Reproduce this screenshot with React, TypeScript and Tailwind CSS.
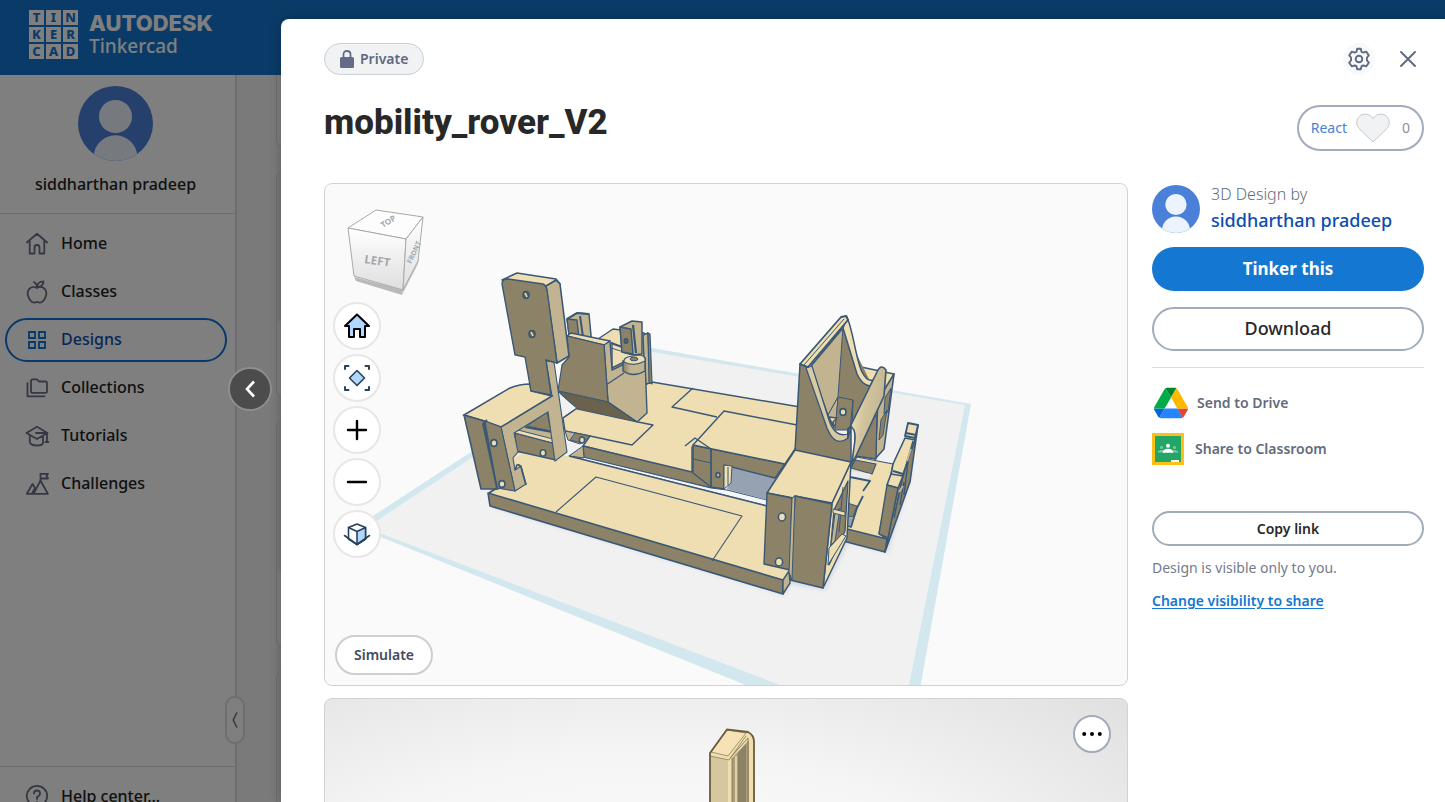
import type { ReactNode } from "react";

const TOP = "#eedeb1";
const MID = "#c2b490";
const DARK = "#8c8268";
const DEEP = "#6b624e";
const INK = "#3a5876";

function F({ p, c = TOP, s = INK, w = 1 }: { p: string; c?: string; s?: string; w?: number }) {
  return <polygon points={p} fill={c} stroke={s} strokeWidth={w} strokeLinejoin="round" />;
}

function L({ p, w = 1 }: { p: string; w?: number }) {
  return <polyline points={p} fill="none" stroke={INK} strokeWidth={w} strokeLinejoin="round" />;
}

function Hole({ x, y, r = 3.4, c = TOP }: { x: number; y: number; r?: number; c?: string }) {
  return <ellipse cx={x} cy={y} rx={r} ry={r + 0.4} fill={c} stroke={INK} strokeWidth={1.6} />;
}

function RoverScene() {
  return (
    <svg viewBox="325 184 802 501" preserveAspectRatio="xMidYMid slice" className="absolute inset-0 size-full" role="img" aria-label="3D view of the rover">
      <defs>
        <linearGradient id="flap" x1="0" x2="1" y1="0" y2="0.4">
          <stop offset="0.2" stopColor={TOP} />
          <stop offset="0.5" stopColor="#d2c49d" />
          <stop offset="1" stopColor={MID} />
        </linearGradient>
        <linearGradient id="boss" x1="0" x2="1">
          <stop offset="0" stopColor={DARK} />
          <stop offset="0.35" stopColor={MID} />
          <stop offset="1" stopColor={MID} />
        </linearGradient>
        <linearGradient id="cube" x1="0" x2="0" y1="0" y2="1">
          <stop offset="0" stopColor="#ffffff" />
          <stop offset="1" stopColor="#dedede" />
        </linearGradient>
        <filter id="soft" x="-10%" y="-10%" width="120%" height="120%">
          <feGaussianBlur stdDeviation="2" />
        </filter>
      </defs>

      {/* workplane */}
      <polygon points="356,527 635,345 971,404 918,700 785,701" fill="#d2e8ee" />
      <polygon points="366,528 635,349 965,405 906,700 820,700" fill="#f1f1f1" />
      <polygon points="489,506 784,595 791,584 825,590 848,543 888,553 912,470 880,480" fill="#c3cad6" opacity="0.6" filter="url(#soft)" />

      {/* rear deck */}
      <F p="577,408 652,382 800,407 800,465 692,473 583,446 590,436 565,431 563,418" w={1.4} />
      <F p="583,446 692,472 692,447 713,450 711,488 584,458" c={DARK} w={1.4} />
      <F p="583,457 711,488 727,490 767,500 767,506 569,456" c="#f4f6f9" w={1.2} />
      <F p="733,467 777,477 767,500 727,489" c="#96a2b1" s="none" />
      <F p="693,445 785,464 775,478 724,465 724,489 711,487 693,473" c={DARK} w={1.4} />
      <F p="724,411 797,425 797,446 785,464 693,445" w={1.4} />
      <F p="724,465 732,466 731,483 724,489" />
      <L p="693,459 711,463" />
      <L p="711,448 711,488" w={1.8} />
      <L p="685,446 695,438 711,449" w={1.4} />
      <L p="728,467 728,485" />
      <Hole x={718} y={475} r={2} c={MID} />
      <L p="693,388 672,407 717,417" w={1.3} />
      <L p="563,418 577,408" w={1.4} />
      <L p="638,422 653,425 632,445 590,436" w={1.4} />
      <F p="565,431 590,436 580,444 568,440" c={MID} />
      <F p="575,433 590,436 582,443 570,440" c={DARK} />
      <Hole x={582} y={440} r={2.6} />
      <F p="569,456 583,446 584,458" c={MID} />

      {/* front base */}
      <F p="488,493 500,470 522,452 569,456 767,506 765,564 789,571 783,580" s="none" />
      <L p="569,456 767,506" w={1.6} />
      <F p="488,493 783,580 783,594 490,506" c={DARK} w={1.6} />
      <F p="783,580 789,571 790,583 783,594" c={MID} w={1.4} />
      <L p="556,512 596,477 742,516 712,561" w={1.1} />

      {/* bracket, clips and boss */}
      <F p="567,319 577,313 589,314 592,346 570,340" c={MID} w={1.5} />
      <F p="567,319 577,320 579,338 569,336" c={DARK} w={1.4} />
      <L p="580,316 583,337" w={2} />
      <L p="567,319 577,313 589,314" w={2} />
      <F p="598,339 613,329 644,333 650,360 645,376 610,370" w={1.4} />
      <L p="611,343 625,348" w={2} />
      <L p="611,348 624,352" />
      <F p="643,335 648,333 650,383 645,384" c={MID} w={1.4} />
      <F p="648,333 650,334 652,384 649,382" c={DARK} w={1.2} />
      <F p="620,327 632,321 642,322 642,354 633,355 622,352" c={MID} w={1.5} />
      <F p="620,327 631,329 633,354 622,352" c={DARK} w={1.4} />
      <L p="633,325 636,353" w={2.2} />
      <Hole x={626} y={341} r={1.8} c={DEEP} />
      <F p="604,344 610,341 612,370 624,364 645,358 647,413 637,422 608,402" c={MID} w={1.4} />
      <path d="M623 361 V371 Q633 378 645 371 V360 Z" fill="url(#boss)" stroke={INK} strokeWidth="1.4" />
      <path d="M624 362 Q623 357 633 356 L640 355 Q646 356 645 361 Q634 367 624 362 Z" fill={TOP} stroke={INK} strokeWidth="1.2" />
      <ellipse cx="634" cy="359" rx="4" ry="1.8" fill={DARK} stroke={INK} />
      <L p="606,385 624,373" w={1.4} />
      <L p="612,342 612,368 624,362" w={1.4} />
      <F p="567,336 571,333 610,341 604,345" w={1.4} />
      <F p="567,336 604,345 608,402 558,391 562,365 569,357" c={DARK} w={1.2} />
      <F p="558,391 608,402 637,422 577,409" c={DEEP} w={1.2} />
      <F p="559,394 576,408 563,416" c="#f1f1f1" s="none" />

      {/* left block */}
      <F p="515,430 548,412 556,452 518,452" c={MID} w={1.2} />
      <F p="527,426 547,412 551,431" c={DARK} />
      <F p="515,433 553,443 556,460 516,451" c={DARK} w={1.4} />
      <F p="515,433 518,430 553,439 553,443" />
      <L p="525,427 552,432" w={2} />
      <Hole x={543} y={453} r={2.8} />
      <polygon points="501,427 552,396 546,361 554,362 567,452 555,461 548,412 514,433 518,452 513,458 515,470 521,466 526,484 515,491" fill={MID} stroke={INK} strokeWidth="1.1" />
      <path d="M515 470 L517 465 Q521 464 522 471 L526 485" fill="none" stroke={INK} strokeWidth="1.6" />
      <path d="M464 415 L510 388 Q520 384 530 384 L531 391 L552 396 L501 427 L484 421 Z" fill={TOP} stroke={INK} strokeWidth="1.5" />
      <F p="464,415 484,421 498,489 481,489" c={DARK} w={1.6} />
      <F p="485,421 501,427 515,491 497,488" c={DARK} w={1.1} />
      <L p="487,420 483,424 497,488 489,493" w={1.8} />
      <Hole x={494} y={443} r={3} />
      <Hole x={502} y={484} r={3} />

      {/* tall post */}
      <F p="502,280 517,273 556,279 560,284 546,287" w={1.6} />
      <F p="546,286 556,280 560,284 569,356 557,363" c={MID} w={1.6} />
      <path d="M502 284 Q502 279 508 279 L543 284 Q546 285 547 290 L557 363 L546 360 L551 395 L531 391 L525 357 L515 355 Z" fill={DARK} stroke={INK} strokeWidth="1.4" />
      <L p="546,286 557,280" />
      <Hole x={526} y={295} r={3} c={DEEP} />
      <Hole x={532} y={334} r={3} c={DEEP} />
      <path d="M525 293 l2 4 M531 332 l2 4" stroke={TOP} strokeWidth="1.6" />

      {/* right rear block */}
      <F p="861,367 894,374 884,395 862,385" w={1.6} />
      <F p="894,374 884,449 875,459 878,400" c={MID} w={1.6} />
      <F p="885,398 891,388 888,412 884,414" c={DARK} />
      <F p="881,420 887,410 883,435 879,440" c={DARK} />
      <F p="855,430 877,415 876,459 855,456" c={DARK} w={1.4} />

      {/* right foot */}
      <F p="851,466 857,457 893,464 879,533 887,540 843,529 841,480" w={1.2} />
      <F p="855,460 876,464 872,474 851,468" c={DARK} w={1.2} />
      <F p="851,471 871,474 868,480 850,477" c="#e9edf2" s="none" />
      <F p="841,501 857,506 853,517 842,515" c={DARK} />
      <F p="845,516 853,518 851,526 844,524" c="#96a2b1" s="none" />
      <L p="850,477 870,481 863,491" w={1.8} />
      <L p="863,496 857,508 851,527 845,525" w={1.8} />
      <F p="843,528 887,539 885,552 843,541" c={DARK} w={1.5} />
      <F p="898,487 902,475 915,437 918,425 910,482 885,552 888,538" c={DARK} w={1.6} />
      <F p="893,464 905,438 915,440 901,480 891,475" w={1.6} />
      <F p="908,423 918,425 915,438 905,436" w={1.8} />
      <L p="906,433 916,435" w={2} />
      <F p="887,485 891,474 903,476 898,488" w={1.6} />
      <F p="887,485 898,488 888,538 879,534" c={DARK} w={1.4} />
      <L p="893,471 903,474" w={2} />
      <path d="M913 441 L902 480 L894 518 M908 462 L904 495 M899 495 L895 512 M904 482 L900 505" fill="none" stroke={INK} strokeWidth="1.4" />
      <path d="M911 449 L907 461 M903 486 L899 492" stroke={MID} strokeWidth="2" />

      {/* right tower */}
      <F p="812,367 843,327 872,385 850,430 830,425" c={DARK} s="none" />
      <F p="811,366 843,327 838,397 828,415" c={MID} />
      <F p="828,415 838,397 836,428" c={MID} />
      <F p="838,397 853,400 850,430 835,430" c={DARK} />
      <L p="853,400 852,425" />
      <F p="829,417 837,418 833,422 834,428" c={TOP} w={1.5} />
      <Hole x={843} y={412} r={3} />
      <path d="M843 328 L847 317 C853 330 856 360 862 372 Q867 382 873 380 L870 386 Q862 385 857 374 Z" fill={TOP} stroke={INK} strokeWidth="1.5" />
      <path d="M800 364 L807 367 L826 424 Q833 446 848 437 L851 428 L851 462 L795 451 Z" fill={DARK} stroke={INK} strokeWidth="1.5" />
      <path d="M806 368 L812 366 L829 420 Q835 438 848 434 L848 438 Q835 448 827 428 Z" fill="#d8caa2" stroke={INK} strokeWidth="1.3" />
      <F p="800,364 841,317 846,316 848,320 808,367" w={1.8} />
      <L p="804,365 844,319" />
      <L p="811,366 843,328" w={1.6} />
      <path d="M850 427 L877 372 Q881 363 886 370 L884 396 L855 458 L852 462 L855 440 Q856 428 850 427 Z" fill="url(#flap)" stroke={INK} strokeWidth="1.6" />
      <path d="M848 438 V429 L852 426" fill="none" stroke={INK} strokeWidth="2" />

      {/* front right box */}
      <F p="832,503 851,462 847,538 823,588" c={TOP} w={1.5} />
      <F p="834,510 848,481 845,531 829,565" c={DARK} w={1.3} />
      <F p="829,548 842,534 846,536 828,565" />
      <F p="835,513 840,508 835,541 831,545" c={MID} />
      <L p="843,487 839,532" />
      <F p="833,509 845,512 845,516 833,513" />
      <F p="767,493 795,450 851,462 832,503 795,496 793,498" w={1.5} />
      <F p="767,493 792,498 790,570 764,564" c={DARK} w={1.4} />
      <F p="795,496 832,504 823,588 790,580" c={DARK} w={1.5} />
      <F p="792,498 795,496 792,580 789,572" c={MID} />
      <Hole x={782} y={517} r={3.6} />
      <Hole x={779} y={562} r={3.6} />

      {/* view cube */}
      <polygon points="354,277 403,290 402,295 356,281" fill="#b9b9b9" />
      <polygon points="402,295 403,289 419,259 418,264" fill="#c6c6c6" />
      <g stroke="#a9a9a9" strokeWidth="1" strokeLinejoin="round">
        <polygon points="348,228 376,210 423,217 406,239" fill="#fdfdfd" />
        <polygon points="348,228 406,239 403,290 354,276" fill="url(#cube)" />
        <polygon points="406,239 423,217 418,261 403,290" fill="url(#cube)" />
      </g>
      <g className="font-['Noto_Sans']" fontWeight="700" fill="#a4a7ab">
        <text x="364" y="263" fontSize="11.5" transform="rotate(8 364 263)">LEFT</text>
        <text x="383" y="228" fontSize="8" transform="rotate(-32 383 228)">TOP</text>
        <text x="411" y="264" fontSize="7" transform="rotate(-64 411 264)">FRONT</text>
      </g>
    </svg>
  );
}

function Avatar({ className }: { className: string }) {
  return (
    <svg viewBox="0 0 48 48" className={className} aria-hidden="true">
      <clipPath id="avatar-clip"><circle cx="24" cy="24" r="24" /></clipPath>
      <g clipPath="url(#avatar-clip)">
        <rect width="48" height="48" fill="#4a80d8" />
        <g fill="#ecf3fc">
          <circle cx="24" cy="19.5" r="10.6" />
          <circle cx="24" cy="45.5" r="14" />
        </g>
      </g>
    </svg>
  );
}

function Glyph({ children }: { children: ReactNode }) {
  return (
    <svg viewBox="0 0 24 24" className="size-6 shrink-0" fill="none" stroke="currentColor" strokeWidth="1.8" strokeLinejoin="round" strokeLinecap="round" aria-hidden="true">
      {children}
    </svg>
  );
}

const navItems: { label: string; active?: boolean; icon: ReactNode }[] = [
  { label: "Home", icon: <path d="M1.8 10.5 12 1.8l10.200 8.700M4.700 8.500V21.500H9.500V15.500Q9.500 13 12 13T14.500 15.500V21.500H19.300V8.500" /> },
  { label: "Classes", icon: <path d="M12 8C9.500 6.500 6 6.800 4 9.200C1 13 3.500 19.500 7 22Q9 23.200 12 21.800Q15 23.200 17 22C20.500 19.500 23 13 20 9.200C18 6.800 14.500 6.500 12 8ZM12 8C12 5 10.800 3 9 2M12.500 7C12 3.500 14.500 1.300 18.500 1.300C18.500 5 16 7.300 12.500 7Z" /> },
  { label: "Designs", active: true, icon: <path d="M4 4h6v6H4zM14 4h6v6h-6zM4 14h6v6H4zM14 14h6v6h-6z" strokeLinejoin="miter" /> },
  { label: "Collections", icon: <path d="M6 5Q6 3.300 7.500 3.300H12L14 5.500H20.500Q22 5.500 22 7V15.500Q22 16.800 20.500 16.800H7.500Q6 16.800 6 15.500ZM2.500 7V20.300H19.500" /> },
  { label: "Tutorials", icon: <path d="M1.500 9 12 2.800 22.500 9 12 15ZM4.800 11.500V18Q5.500 21.500 12 21.500T18 18V12M11 9H22V17.500M20.500 18H23.300" /> },
  { label: "Challenges", icon: <path d="M1.800 21.800 7.500 12 10 16M8.500 21.800 15.500 8.500 22.800 21.800ZM1.800 21.800H8.500M15.500 8.500V1.800H23L21.500 4L23 6.500H15.500M7 21.500 10 16" /> },
];

function BackgroundPage() {
  return (
    <div className="flex h-full flex-col bg-[#f5f5f5]">
      <header className="flex h-[75px] shrink-0 items-start bg-[#1477d1] pt-[10px] pl-[29px]">
        <a href="#" className="flex gap-[11px] text-white">
          <span className="grid grid-cols-3 gap-[2px]" aria-hidden="true">
            {"TINKERCAD".split("").map((c, i) => (
              <span key={i} className="flex size-[15px] items-center justify-center bg-white font-['Noto_Sans'] text-[13px] leading-none font-extrabold text-[#1477d1]">{c}</span>
            ))}
          </span>
          <span className="flex flex-col">
            <span className="font-[Inter] text-[22px] leading-[26px] font-extrabold">AUTODESK</span>
            <span className="text-[19px] leading-5">Tinkercad</span>
          </span>
        </a>
      </header>
      <div className="flex min-h-0 flex-1">
        <aside className="relative flex w-[237px] shrink-0 flex-col border-r-2 border-[#dadae4] bg-white">
          <div className="flex flex-col items-center gap-[11px] border-b border-[#d9dbe3] pt-[11px] pr-1 pb-[17px]">
            <Avatar className="size-[75px]" />
            <span className="text-base text-[#222]">siddharthan pradeep</span>
          </div>
          <nav className="flex flex-col gap-1 pt-2 pr-2 pl-[5px]">
            {navItems.map((n) => (
              <a
                key={n.label}
                href="#"
                className={
                  n.active
                    ? "flex h-11 items-center gap-3 rounded-full border-2 border-[#0a74d6] pl-[18px] text-base text-[#0c4eb0]"
                    : "flex h-11 items-center gap-3 rounded-full border-2 border-transparent pl-[18px] text-base text-[#222]"
                }
              >
                <span className={n.active ? "text-[#0a74d6]" : "text-[#6a7086]"}><Glyph>{n.icon}</Glyph></span>
                <span className="pb-[2px]">{n.label}</span>
              </a>
            ))}
          </nav>
          <div className="mt-auto h-9 shrink-0 border-t border-[#d9dbe3] pt-[17px]">
            <a href="#" className="flex items-center gap-3 pl-[25px] text-base text-[#222]">
              <span className="text-[#6a7086]">
                <Glyph><circle cx="12" cy="12" r="10.200" /><path d="M9 9.500Q9 6.500 12 6.500T15 9.500Q15 11.500 12 13V15M12 18v.2" /></Glyph>
              </span>
              Help center...
            </a>
          </div>
          <button aria-label="Collapse menu" className="absolute right-[-10px] bottom-[58px] flex h-12 w-5 items-center justify-center rounded-full border-2 border-[#dadae4] bg-white text-[#777]">
            <svg viewBox="0 0 6 16" className="h-4 w-[6px]" fill="none" stroke="currentColor" strokeWidth="1.600"><path d="M5 0.500 1.200 8 5 15.500" /></svg>
          </button>
        </aside>
        <div className="flex min-w-0 flex-1 flex-col gap-[22px] overflow-hidden pl-[39px]">
          <div className="h-[73px] shrink-0 rounded-bl-lg border-b border-l border-[#d9dbe3] bg-white" />
          {[0, 1, 2].map((i) => (
            <div key={i} className="flex h-[228px] shrink-0 flex-col rounded-lg border border-[#d9dbe3] bg-white">
              <div className="h-[150px] rounded-t-lg bg-[#f0f0f0]" />
            </div>
          ))}
        </div>
      </div>
    </div>
  );
}

const viewTools: { label: string; icon: ReactNode }[] = [
  { label: "Home view", icon: <path d="M14 2.500 26 14H22V25H17V17H11V25H6V14H2Z" fill="#b0d8ff" stroke="#000" /> },
  {
    label: "Fit view",
    icon: (
      <>
        <path d="M14 6.500 21.500 14 14 21.500 6.500 14Z" fill="#b0d8ff" stroke="#26425f" strokeWidth="1.600" />
        <path d="M2 5V2H5.500M22.500 2H26V5M26 23V26H22.500M5.500 26H2V23" stroke="#26425f" fill="none" />
      </>
    ),
  },
  { label: "Zoom in", icon: <path d="M14 5V23M5 14H23" stroke="#000" strokeWidth="2.400" /> },
  { label: "Zoom out", icon: <path d="M5 14H23" stroke="#000" strokeWidth="2.400" /> },
  {
    label: "Perspective",
    icon: (
      <g stroke="#26425f" strokeWidth="1.600">
        <path d="M14 4 22.500 7.500V19L14 24.500 5.500 19V7.500Z" fill="#fff" />
        <path d="M14 11.500 22.500 7.500V19L14 24.500Z" fill="#b0d8ff" />
        <path d="M5.500 7.500 14 11.500M1.500 15.500 14 24.500 26.500 15.500" fill="none" />
      </g>
    ),
  },
];

function Viewer() {
  return (
    <section className="relative aspect-[804/503] overflow-hidden rounded-lg border border-[#cfd3d9] bg-[#fafafa]">
      <RoverScene />
      <div className="relative flex h-full flex-col items-start px-2 pt-[118px] pb-[10px]">
        <div className="flex flex-col gap-1">
          {viewTools.map((t) => (
            <button key={t.label} aria-label={t.label} className="flex size-12 items-center justify-center rounded-full border-2 border-[#e7e7e7] bg-white/90">
              <svg viewBox="0 0 28 28" className="size-7" strokeWidth="2" strokeLinejoin="round" strokeLinecap="round">{t.icon}</svg>
            </button>
          ))}
        </div>
        <button className="mt-auto ml-[2px] h-10 rounded-full border-2 border-[#ccced4] bg-white px-[17px] text-sm font-semibold text-[#434a5c]">Simulate</button>
      </div>
    </section>
  );
}

function PreviewCard() {
  return (
    <section className="relative aspect-[804/503] overflow-hidden rounded-lg border border-[#cfd3d9] bg-[radial-gradient(ellipse_at_40%_50%,#ffffff_0%,#f5f5f5_55%,#e0e0e0_100%)]">
      <svg viewBox="325 699 802 501" className="absolute inset-0 size-full" role="img" aria-label="Design thumbnail">
        <path d="M710 760 V752 L726 730 L749 732 Q754 734 755 740 V1000 H710Z" fill={TOP} />
        <path d="M710 756 L728 760 V1000 H710Z" fill="#d6c79f" />
        <path d="M711 752 L727 730 L746 733 L728 756 Z" fill="#f6e2b4" stroke="#8d8059" strokeWidth="0.800" />
        <path d="M710 756 L729 760 L746 736" fill="none" stroke="#9d9068" strokeWidth="1" />
        <path d="M732 758 L749 740 V1000 H732Z" fill="#aa9d77" />
        <path d="M738 753 L746 744 V1000 H738Z" fill={DARK} />
        <path d="M736 756 V1000" stroke={TOP} strokeWidth="1.600" />
        <path d="M730 758 L748 738 V1000 M732 758V1000" stroke="#877a55" strokeWidth="0.900" fill="none" />
        <path d="M710 1000 V753 L727 729.500 L748 732 Q754 735 754 742 V1000" fill="none" stroke="#685d3e" strokeWidth="1.800" />
      </svg>
      <button aria-label="More options" className="absolute top-4 right-4 flex size-[38px] items-center justify-center rounded-full border-2 border-[#a1abb9] bg-white">
        <svg viewBox="0 0 22 6" className="h-[6px] w-[22px]"><circle cx="3.200" cy="3" r="2" /><circle cx="11" cy="3" r="2" /><circle cx="18.800" cy="3" r="2" /></svg>
      </button>
    </section>
  );
}

function DriveLogo() {
  return (
    <svg viewBox="0 0 87.300 78" className="h-8 w-[34px]" aria-hidden="true">
      <path d="m6.600 66.850 3.850 6.650c.8 1.400 1.950 2.500 3.300 3.300l13.750-23.800h-27.500c0 1.550.4 3.100 1.200 4.500z" fill="#0066da" />
      <path d="m43.650 25-13.750-23.800c-1.350.8-2.500 1.900-3.300 3.300l-25.400 44a9.060 9.060 0 0 0 -1.200 4.500h27.500z" fill="#00ac47" />
      <path d="m73.550 76.800c1.350-.8 2.500-1.900 3.300-3.300l1.600-2.750 7.650-13.250c.8-1.400 1.200-2.950 1.200-4.500h-27.502l5.852 11.500z" fill="#ea4335" />
      <path d="m43.650 25 13.750-23.800c-1.350-.8-2.900-1.200-4.500-1.200h-18.500c-1.600 0-3.150.45-4.500 1.200z" fill="#00832d" />
      <path d="m59.800 53h-32.300l-13.750 23.800c1.350.8 2.900 1.200 4.500 1.200h50.800c1.600 0 3.150-.45 4.500-1.200z" fill="#2684fc" />
      <path d="m73.400 26.500-12.700-22c-.8-1.400-1.950-2.500-3.300-3.300l-13.750 23.800 16.150 28h27.450c0-1.550-.4-3.100-1.200-4.500z" fill="#ffba00" />
    </svg>
  );
}

function ClassroomLogo() {
  return (
    <svg viewBox="0 0 32 32" className="size-8" aria-hidden="true">
      <rect width="32" height="32" fill="#fbc116" />
      <rect x="3" y="3" width="26" height="26" fill="#23a566" />
      <g fill="#7dc9a3">
        <circle cx="9.500" cy="14.500" r="1.500" /><circle cx="22.500" cy="14.500" r="1.500" />
        <path d="M5.500 19.500Q6 17 9.500 17T13 19.500ZM19 19.500Q19.500 17 22.500 17T27 19.500Z" />
      </g>
      <circle cx="16" cy="12.700" r="2" fill="#fff" />
      <path d="M10.700 19.700Q11 15.800 16 15.800T21.300 19.700Z" fill="#fff" />
      <path d="M19 27H27V29H19Z" fill="#fff" />
    </svg>
  );
}

function DesignDetails() {
  return (
    <aside className="flex w-[272px] shrink-0 flex-col pt-[2px]">
      <div className="flex h-[52px] gap-[11px]">
        <Avatar className="size-12 shrink-0" />
        <div className="flex flex-col">
          <span className="text-base leading-[18px] font-light text-[#636b7d]">3D Design by</span>
          <a href="#" className="text-lg leading-[34px] font-medium text-[#0c4eb0]">siddharthan pradeep</a>
        </div>
      </div>
      <button className="mt-[10px] h-11 rounded-full bg-[#1477d1] pb-[2px] text-[17px] leading-none font-bold text-white">Tinker this</button>
      <button className="mt-4 h-11 rounded-full border-2 border-[#a1abb9] pb-[2px] text-[18px] leading-none font-medium text-[#282828]">Download</button>
      <hr className="mt-4 border-[#dcdcdc]" />
      <a href="#" className="mt-[19px] flex h-8 items-center gap-[9px] pl-[2px] text-sm font-semibold text-[#636b7d]"><DriveLogo />Send to Drive</a>
      <a href="#" className="mt-[14px] flex h-8 items-center gap-[11px] text-sm font-semibold text-[#636b7d]"><ClassroomLogo />Share to Classroom</a>
      <button className="mt-[46px] h-[35px] rounded-full border-2 border-[#a1abb9] text-sm font-semibold text-[#282828]">Copy link</button>
      <p className="mt-3 text-sm font-normal text-[#737b8b]">Design is visible only to you.</p>
      <a href="#" className="mt-[13px] self-start text-sm font-semibold text-[#1477d1] underline underline-offset-2">Change visibility to share</a>
    </aside>
  );
}

function DesignDialog() {
  return (
    <div role="dialog" aria-modal="true" aria-labelledby="design-title" className="min-w-0 flex-1 overflow-hidden rounded-tl-lg bg-white pt-6 pr-[21px] pl-[43px] shadow-[0_0_12px_rgba(0,0,0,0.25)]">
      <div className="flex h-8 items-center justify-between">
        <span className="flex h-8 items-center gap-[6px] rounded-full border border-[#cad0d8] bg-[#f1f2f4] px-[15px] text-sm font-semibold text-[#5f6980]">
          <svg viewBox="0 0 14 18" className="h-[18px] w-[14px]" aria-hidden="true">
            <rect y="7" width="14" height="11" rx="1.500" fill="#636c85" />
            <path d="M3.500 8V4.500Q3.500 1 7 1T10.500 4.500V8" fill="none" stroke="#636c85" strokeWidth="1.800" />
          </svg>
          Private
        </span>
        <div className="flex items-center gap-[17px] text-[#5f6980]">
          <button aria-label="Settings" className="flex size-8 items-center justify-center rounded-full bg-[#f8f9fb]">
            <svg viewBox="0 0 24 24" className="size-6" fill="none" stroke="currentColor" strokeWidth="1.900" strokeLinejoin="round">
              <path d="M10.200 1.800H13.800L14.500 4.700Q15.300 5.300 16.300 5.500L19.300 4.700L21.800 8.300L20 10.500Q19.700 12 20 13.500L21.800 15.700L19.300 19.300L16.300 18.500Q15.300 18.700 14.500 19.300L13.800 22.200H10.200L9.500 19.300Q8.700 18.700 7.700 18.500L4.700 19.300L2.200 15.700L4 13.500Q4.300 12 4 10.500L2.200 8.300L4.700 4.700L7.700 5.500Q8.700 5.300 9.500 4.700Z" />
              <circle cx="12" cy="12" r="3.300" />
            </svg>
          </button>
          <button aria-label="Close" className="flex size-8 items-center justify-center">
            <svg viewBox="0 0 16 16" className="size-4" stroke="currentColor" strokeWidth="1.900" strokeLinecap="round"><path d="M1 1 15 15M15 1 1 15" /></svg>
          </button>
        </div>
      </div>
      <div className="mt-[30px] flex h-[46px] items-start justify-between">
        <h1 id="design-title" className="font-[Roboto] text-[35px] leading-[36px] font-extrabold text-[#282828]">mobility_rover_V2</h1>
        <button className="flex h-[46px] items-center gap-[9px] rounded-full border-2 border-[#a1abb9] px-[12px] text-sm font-normal text-[#4a80d8]">
          React
          <svg viewBox="0 0 34 30" className="h-[30px] w-[34px]" aria-hidden="true">
            <path d="M17 29 3 15.500C-1.500 10.500 1 1.500 8.500 1.200Q14 1 17 5.500Q20 1 25.500 1.200C33 1.500 35.500 10.500 31 15.500Z" fill="#f0f2f4" stroke="#c3c8cc" />
          </svg>
          <span className="pl-[3px] text-[#8a919f]">0</span>
        </button>
      </div>
      <div className="mt-8 flex items-start gap-6">
        <div className="flex min-w-0 flex-1 flex-col gap-3">
          <Viewer />
          <PreviewCard />
        </div>
        <DesignDetails />
      </div>
    </div>
  );
}

export default function App() {
  return (
    <div className="relative h-screen overflow-hidden font-['Noto_Sans',sans-serif] font-medium">
      <BackgroundPage />
      <div className="absolute inset-0 flex bg-black/50 pt-[19px]">
        <div className="flex w-[281px] shrink-0 items-center justify-end pr-[9px] pb-[43px]">
          <button aria-label="Previous design" className="flex size-[44px] items-center justify-center rounded-full border-2 border-[#8e8e8e] bg-[#4c4c4c]">
            <svg viewBox="0 0 10 18" className="h-[18px] w-[10px]" fill="none" stroke="#fff" strokeWidth="2.600"><path d="M9 1.500 2 9 9 16.500" /></svg>
          </button>
        </div>
        <DesignDialog />
      </div>
    </div>
  );
}
